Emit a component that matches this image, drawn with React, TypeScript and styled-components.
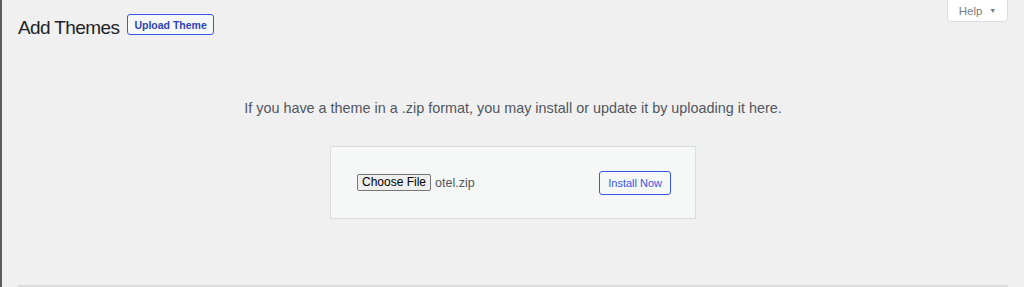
import React from 'react';
import styled, { createGlobalStyle } from 'styled-components';

const GlobalStyle = createGlobalStyle`
    html, body {
        margin: 0;
        padding: 0;
        background: #f0f0f1;
        font-family: "Liberation Sans", Arial, sans-serif;
    }
`;

const Page = styled.div`
    height: 287px;
    border-left: 2px solid #5c5c5c;
    box-sizing: border-box;
    padding: 0 16px;
    overflow: hidden;
    position: relative;
`;

const Header = styled.div`
    display: flex;
    align-items: center;
    gap: 8px;
    padding-top: 14px;
`;

const Title = styled.h1`
    margin: 0;
    padding-top: 3px;
    font-size: 19px;
    letter-spacing: -0.6px;
    font-weight: 400;
    color: #1d2327;
    line-height: 22px;
`;

const OutlineButton = styled.button<{ $bold?: boolean }>`
    font-family: inherit;
    background: #f6f7f7;
    border: 1px solid #3858e9;
    border-radius: 3px;
    color: ${p => (p.$bold ? '#2d45b8' : '#3858e9')};
    font-weight: ${p => (p.$bold ? 700 : 400)};
    cursor: pointer;
`;

const UploadThemeButton = styled(OutlineButton)`
    font-size: 10.5px;
    height: 21px;
    padding: 0 6px;
    align-self: flex-start;
`;

const HelpTab = styled.button`
    position: absolute;
    top: -4px;
    right: 16px;
    width: 61px;
    height: 26px;
    padding-top: 4px;
    background: #fff;
    border: 1px solid #dcdcde;
    border-radius: 0 0 4px 4px;
    font-family: inherit;
    font-size: 11.5px;
    color: #787c82;
    display: flex;
    align-items: center;
    justify-content: center;
    gap: 7px;
`;

const Caret = styled.span`
    font-size: 7px;
`;

const UploadSection = styled.div`
    display: flex;
    flex-direction: column;
    align-items: center;
    padding-top: 57px;
`;

const Intro = styled.p`
    margin: 0 0 26px;
    font-size: 14.4px;
    color: #50575e;
    line-height: 24px;
`;

const UploadForm = styled.form`
    width: 366px;
    height: 73px;
    box-sizing: border-box;
    background: #f6f7f7;
    border: 1px solid #dcdcde;
    display: flex;
    align-items: center;
    justify-content: space-between;
    padding: 0 24px 0 26px;
`;

const FilePicker = styled.div`
    display: flex;
    align-items: center;
    gap: 4px;
`;

const ChooseButton = styled.button`
    font-family: inherit;
    font-size: 12px;
    color: #000;
    background: #efefef;
    border: 1px solid #767676;
    border-radius: 2px;
    height: 17px;
    padding: 0 4px;
    line-height: 15px;
`;

const FileName = styled.span`
    font-size: 12.5px;
    color: #50575e;
`;

const InstallButton = styled(OutlineButton)`
    font-size: 11px;
    height: 24px;
    padding: 0 8px;
`;

const Divider = styled.div`
    position: absolute;
    left: 16px;
    right: 16px;
    bottom: 0;
    height: 2px;
    background: #dcdcde;
`;

const App: React.FC = () => {
    return (
        <>
            <GlobalStyle />
            <Page>
                <HelpTab>
                    Help <Caret>▼</Caret>
                </HelpTab>
                <Header>
                    <Title>Add Themes</Title>
                    <UploadThemeButton $bold>Upload Theme</UploadThemeButton>
                </Header>
                <UploadSection>
                    <Intro>If you have a theme in a .zip format, you may install or update it by uploading it here.</Intro>
                    <UploadForm onSubmit={e => e.preventDefault()}>
                        <FilePicker>
                            <ChooseButton type="button">Choose File</ChooseButton>
                            <FileName>otel.zip</FileName>
                        </FilePicker>
                        <InstallButton type="submit">Install Now</InstallButton>
                    </UploadForm>
                </UploadSection>
                <Divider />
            </Page>
        </>
    );
};

export default App;
